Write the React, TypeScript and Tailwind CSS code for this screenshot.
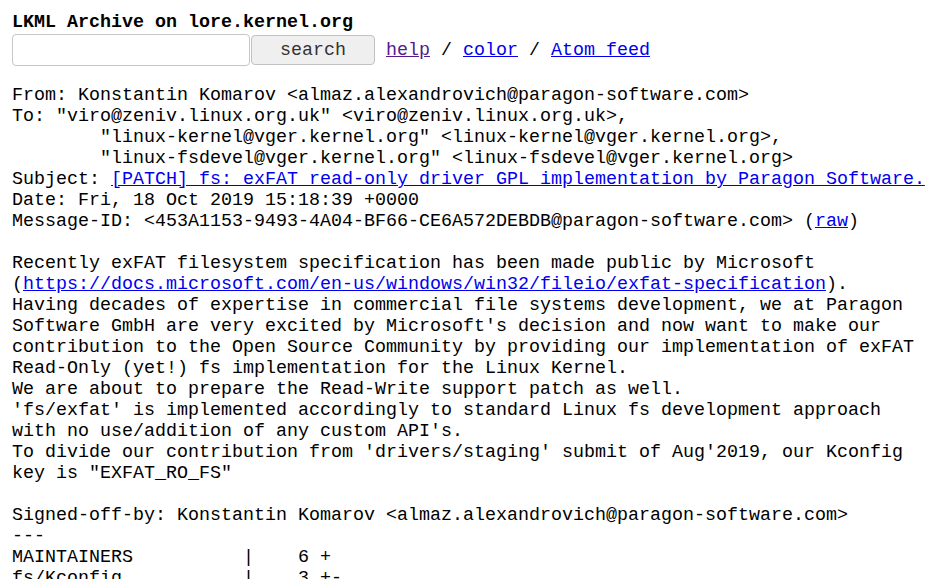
export default function App() {
  const link = "text-[#0000ee] underline";
  return (
    <div className="h-[579px] overflow-hidden bg-white px-[12px] pt-[12px] font-['Liberation_Mono',monospace] text-[18.33px] leading-[21px] text-black">
      {/* Header */}
      <div className="font-bold whitespace-pre">LKML Archive on lore.kernel.org</div>
      <form className="flex h-[34px] items-center whitespace-pre" onSubmit={e => e.preventDefault()}>
        <input
          type="text"
          name="q"
          className="h-[32px] w-[238px] rounded-[4px] border border-[#c6c6c6] bg-white px-1 outline-none"
        />
        <button
          type="submit"
          className="ml-[1px] h-[30px] w-[124px] rounded-[4px] border border-[#c2c2c2] bg-[#efefef] text-[#333333]"
        >
          search
        </button>
        <span> </span>
        <a href="#" className="text-[#551a8b] underline">help</a>
        <span> / </span>
        <a href="#" className={link}>color</a>
        <span> / </span>
        <a href="#" className={link}>Atom feed</a>
      </form>

      {/* Message */}
      <pre className="mt-[18px] font-['Liberation_Mono',monospace]">
        {`From: Konstantin Komarov <almaz.alexandrovich@paragon-software.com>
To: "viro@zeniv.linux.org.uk" <viro@zeniv.linux.org.uk>,
        "linux-kernel@vger.kernel.org" <linux-kernel@vger.kernel.org>,
        "linux-fsdevel@vger.kernel.org" <linux-fsdevel@vger.kernel.org>
Subject: `}
        <a href="#" className={link}>[PATCH] fs: exFAT read-only driver GPL implementation by Paragon Software.</a>
        {`
Date: Fri, 18 Oct 2019 15:18:39 +0000
Message-ID: <453A1153-9493-4A04-BF66-CE6A572DEBDB@paragon-software.com> (`}
        <a href="#" className={link}>raw</a>
        {`)

Recently exFAT filesystem specification has been made public by Microsoft
(`}
        <a href="#" className={link}>https://docs.microsoft.com/en-us/windows/win32/fileio/exfat-specification</a>
        {`).
Having decades of expertise in commercial file systems development, we at Paragon
Software GmbH are very excited by Microsoft's decision and now want to make our
contribution to the Open Source Community by providing our implementation of exFAT
Read-Only (yet!) fs implementation for the Linux Kernel.
We are about to prepare the Read-Write support patch as well.
'fs/exfat' is implemented accordingly to standard Linux fs development approach
with no use/addition of any custom API's.
To divide our contribution from 'drivers/staging' submit of Aug'2019, our Kconfig
key is "EXFAT_RO_FS"

Signed-off-by: Konstantin Komarov <almaz.alexandrovich@paragon-software.com>
---
MAINTAINERS          |    6 +
fs/Kconfig           |    3 +-
fs/Makefile          |    2 +-
fs/exfat/Kconfig     |   31 +
`}
      </pre>
    </div>
  );
}
